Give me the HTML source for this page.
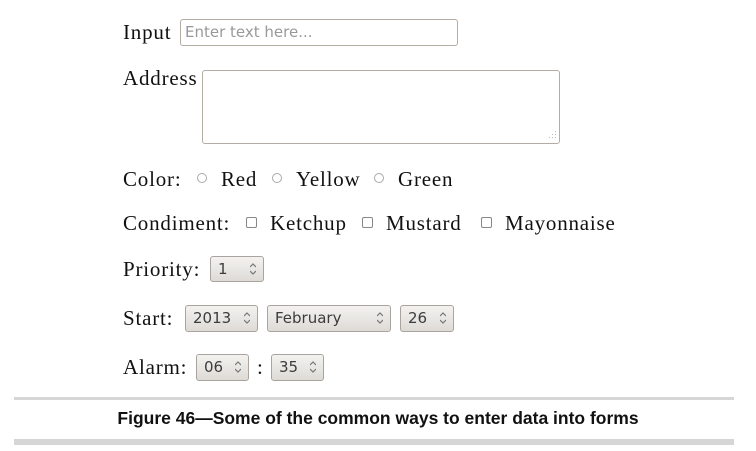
<!DOCTYPE html>
<html><head><style>
body{margin:0;width:756px;height:451px;background:#fff;position:relative;overflow:hidden;font-family:"Liberation Serif",serif;font-size:21px;letter-spacing:0.8px;color:#111}
.a{position:absolute;white-space:nowrap}
.lbl{line-height:22px}
.box{position:absolute;border:1px solid #b5aca4;border-radius:3px;background:#fff;box-sizing:border-box;letter-spacing:0}
.sel{position:absolute;border:1px solid #a9a49e;border-radius:3px;background:linear-gradient(#f3f2f0,#dedbd7);box-sizing:border-box;font-family:"DejaVu Sans","Liberation Sans",sans-serif;font-size:15px;letter-spacing:0;color:#3c3c3c;line-height:24px;padding-left:7px}
.arr{position:absolute;right:7px;top:6px;width:6px;height:12px}
.rad{position:absolute;width:10px;height:10px;border:1px solid #aaa;border-radius:50%;box-sizing:border-box}
.chk{position:absolute;width:11px;height:11px;border:1px solid #888;border-radius:2px;box-sizing:border-box}
</style></head><body>
<div class="a lbl" style="left:123px;top:21px">Input</div>
<div class="box" style="left:180px;top:19px;width:278px;height:27px;font-family:'DejaVu Sans','Liberation Sans',sans-serif;font-size:15px;color:#999;padding:3px 0 0 4px">Enter text here...</div>
<div class="a lbl" style="left:123px;top:67px">Address</div>
<div class="box" style="left:202px;top:70px;width:358px;height:74px"></div>
<svg class="a" style="left:546px;top:130px" width="12" height="12"><g fill="#bbb"><rect x="9" y="1" width="1" height="1"/><rect x="6" y="4" width="1" height="1"/><rect x="9" y="4" width="1" height="1"/><rect x="3" y="7" width="1" height="1"/><rect x="6" y="7" width="1" height="1"/><rect x="9" y="7" width="1" height="1"/></g></svg>

<div class="a lbl" style="left:123px;top:168px">Color:</div>
<div class="rad" style="left:197px;top:173px"></div>
<div class="a lbl" style="left:221px;top:168px">Red</div>
<div class="rad" style="left:272px;top:173px"></div>
<div class="a lbl" style="left:296px;top:168px">Yellow</div>
<div class="rad" style="left:374px;top:173px"></div>
<div class="a lbl" style="left:398px;top:168px">Green</div>

<div class="a lbl" style="left:123px;top:212px">Condiment:</div>
<div class="chk" style="left:246px;top:217px"></div>
<div class="a lbl" style="left:270px;top:212px">Ketchup</div>
<div class="chk" style="left:362px;top:217px"></div>
<div class="a lbl" style="left:386px;top:212px">Mustard</div>
<div class="chk" style="left:481px;top:217px"></div>
<div class="a lbl" style="left:505px;top:212px">Mayonnaise</div>

<div class="a lbl" style="left:123px;top:258px">Priority:</div>
<div class="sel" style="left:210px;top:256px;width:54px;height:26px">1<svg class="arr" viewBox="0 0 6 12"><path d="M0 4L3 1L6 4M0 8L3 11L6 8" fill="none" stroke="#777" stroke-width="1.2"/></svg></div>

<div class="a lbl" style="left:123px;top:307px">Start:</div>
<div class="sel" style="left:185px;top:305px;width:73px;height:27px">2013<svg class="arr" viewBox="0 0 6 12"><path d="M0 4L3 1L6 4M0 8L3 11L6 8" fill="none" stroke="#777" stroke-width="1.2"/></svg></div>
<div class="sel" style="left:267px;top:305px;width:124px;height:27px">February<svg class="arr" viewBox="0 0 6 12"><path d="M0 4L3 1L6 4M0 8L3 11L6 8" fill="none" stroke="#777" stroke-width="1.2"/></svg></div>
<div class="sel" style="left:400px;top:305px;width:54px;height:27px">26<svg class="arr" viewBox="0 0 6 12"><path d="M0 4L3 1L6 4M0 8L3 11L6 8" fill="none" stroke="#777" stroke-width="1.2"/></svg></div>

<div class="a lbl" style="left:123px;top:356px">Alarm:</div>
<div class="sel" style="left:196px;top:354px;width:53px;height:27px">06<svg class="arr" viewBox="0 0 6 12"><path d="M0 4L3 1L6 4M0 8L3 11L6 8" fill="none" stroke="#777" stroke-width="1.2"/></svg></div>
<div class="a lbl" style="left:257px;top:356px">:</div>
<div class="sel" style="left:271px;top:354px;width:53px;height:27px">35<svg class="arr" viewBox="0 0 6 12"><path d="M0 4L3 1L6 4M0 8L3 11L6 8" fill="none" stroke="#777" stroke-width="1.2"/></svg></div>

<div class="a" style="left:14px;top:397px;width:720px;height:3px;background:#d6d6d6"></div>
<div class="a" style="left:0;width:756px;top:408px;text-align:center;font-family:'Liberation Sans',sans-serif;font-weight:bold;font-size:17.5px;letter-spacing:0;color:#111">Figure 46—Some of the common ways to enter data into forms</div>
<div class="a" style="left:14px;top:439px;width:720px;height:6px;background:#d6d6d6"></div>
</body></html>
